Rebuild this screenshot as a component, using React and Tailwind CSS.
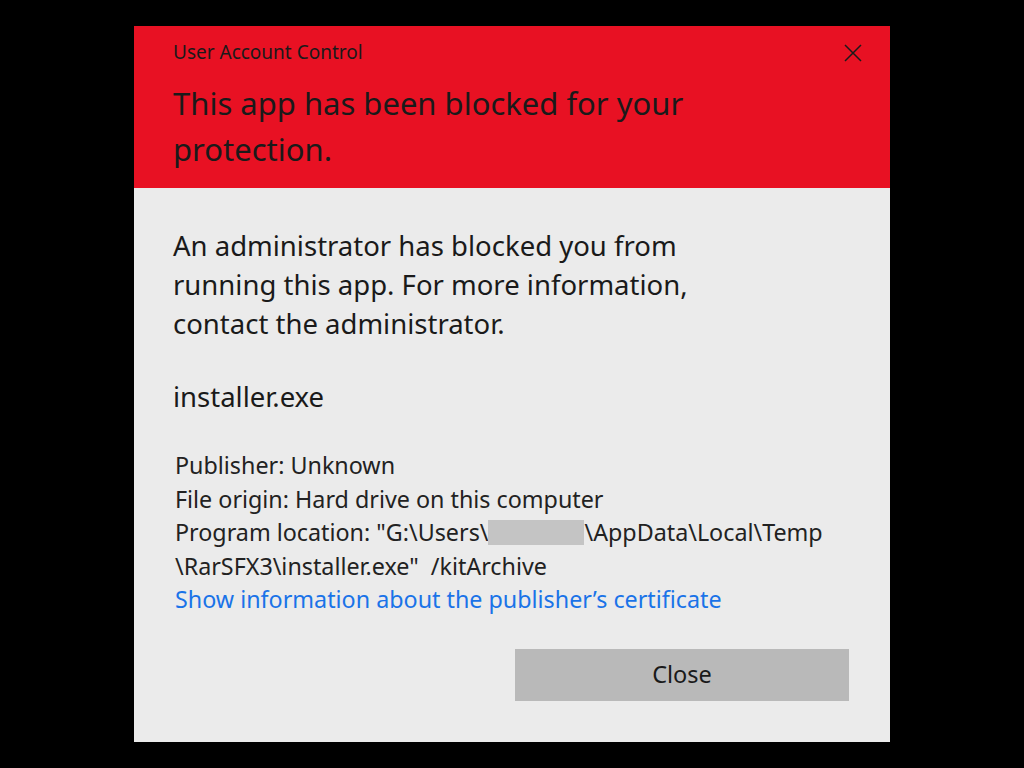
import React from "react";

const CloseIcon = () => (
  <svg width="18" height="18" viewBox="0 0 18 18" fill="none" stroke="#1a1a1a" strokeWidth="1.5">
    <path d="M1 1 L17 17 M17 1 L1 17" />
  </svg>
);

export default function App() {
  return (
    <div className="min-h-screen w-full bg-black flex items-start font-['Noto_Sans',sans-serif]">
      <div className="ml-[134px] mt-[26px] w-[756px] h-[716px] bg-[#ebebeb] flex flex-col">
        {/* header */}
        <div className="bg-[#e81123] h-[162px] relative pl-[39px] pr-[60px] pt-[13px]">
          <div className="text-[19px] leading-[26px] text-[#1a1a1a]">User Account Control</div>
          <div className="mt-[15px] text-[31px] leading-[46px] text-[#1a1a1a] w-[545px]">
            This app has been blocked for your protection.
          </div>
          <button className="absolute right-[28px] top-[18px]">
            <CloseIcon />
          </button>
        </div>

        {/* body */}
        <div className="flex-1 pl-[39px] pr-[41px] pt-[38px] flex flex-col text-[#1a1a1a]">
          <p className="text-[27.5px] leading-[39px] w-[540px]">
            An administrator has blocked you from running this app. For more information, contact the administrator.
          </p>
          <p className="mt-[34px] text-[27.5px] leading-[39px]">installer.exe</p>
          <div className="mt-[33px] pl-[2px] text-[23.3px] leading-[33.5px] text-[#222]">
            <div>Publisher: Unknown</div>
            <div>File origin: Hard drive on this computer</div>
            <div className="flex items-center whitespace-nowrap">
              Program location: "G:\Users\
              <span className="inline-block w-[96px] h-[25px] bg-[#c4c4c4]"></span>
              \AppData\Local\Temp
            </div>
            <div className="whitespace-pre">\RarSFX3\installer.exe"  /kitArchive</div>
            <div className="text-[#1a73e8]">Show information about the publisher’s certificate</div>
          </div>
          <div className="mt-[32px] flex justify-end">
            <button className="w-[334px] h-[52px] bg-[#b9b9b9] text-[23.5px] text-[#1a1a1a]">Close</button>
          </div>
        </div>
      </div>
    </div>
  );
}
